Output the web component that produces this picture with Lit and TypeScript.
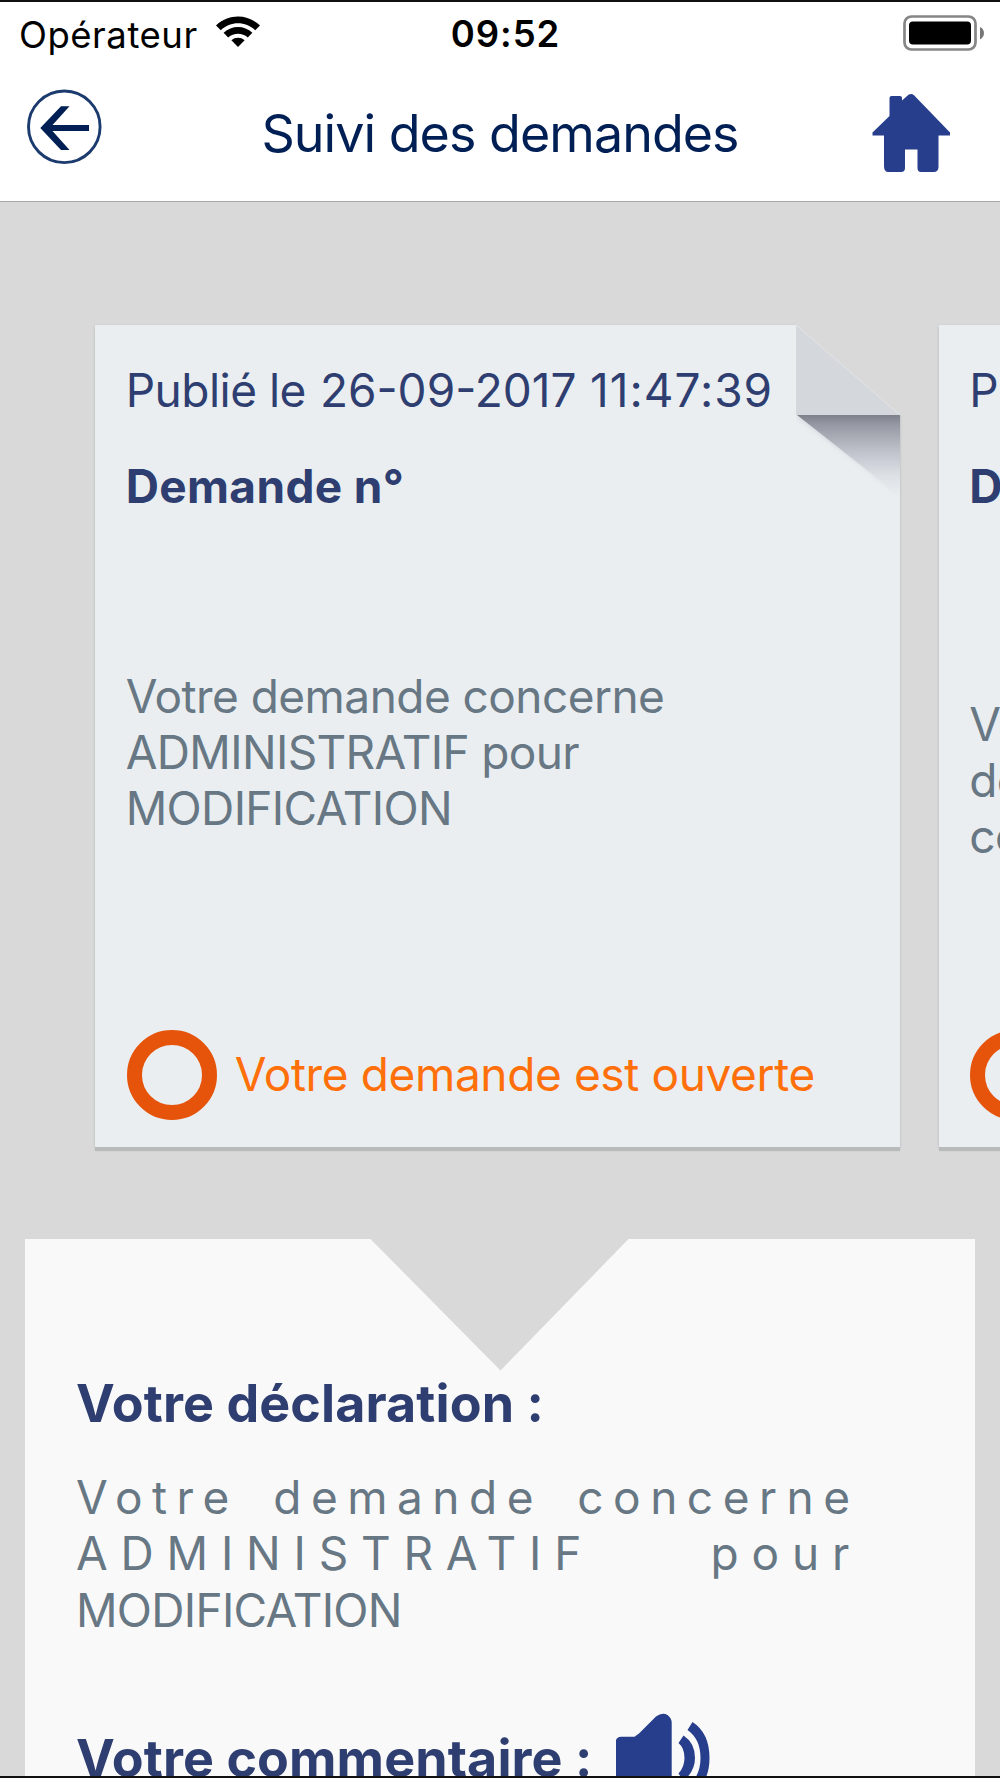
import { LitElement, html, css } from "lit";
import { customElement, property } from "lit/decorators.js";

@customElement("status-bar")
class StatusBar extends LitElement {
  static styles = css`
    :host { display: grid; grid-template-columns: 1fr auto 1fr; height: 64px; align-items: center; color: #000; }
    .left { display: flex; align-items: center; padding-left: 19px; gap: 18px; }
    .carrier { margin-top: 1px; font-size: 36.500px; line-height: 40px; letter-spacing: 0.52px; }
    .time { padding-left: 11px; font-size: 36.500px; line-height: 40px; font-weight: 600; letter-spacing: 0.95px; }
    .wifi { width: 44px; height: 32px; margin-top: -5px; }
    .right { display: flex; justify-content: flex-end; padding-right: 14px; }
    .battery { width: 83px; height: 36px; margin-top: -2px; }
  `;
  render() {
    return html`
      <div class="left">
        <span class="carrier">Opérateur</span>
        <svg class="wifi" viewBox="0 0 44 32">
          <path d="M0 9.400 C12.500-2.400 31.500-2.400 44 9.400 L39.200 14.200 C29.500 5 14.500 5 4.800 14.200 Z" />
          <path d="M7.600 16.800 C15.800 9.200 28.200 9.200 36.400 16.800 L31.800 21.400 C26.200 16.400 17.800 16.400 12.200 21.400 Z" />
          <path d="M15.400 24.200 C19.200 20.900 24.800 20.900 28.600 24.200 L22 31 Z" />
        </svg>
      </div>
      <span class="time">09:52</span>
      <div class="right">
        <svg class="battery" viewBox="0 0 83 36">
          <rect x="1.500" y="1.500" width="71" height="33" rx="7" fill="#fff" stroke="#868686" stroke-width="2.700" />
          <rect x="6" y="6.500" width="62" height="23" rx="4" fill="#000" />
          <path d="M77 12 C82.300 14 82.300 22 77 24.500 Z" fill="#777" />
        </svg>
      </div>
    `;
  }
}

@customElement("nav-bar")
class NavBar extends LitElement {
  static styles = css`
    :host { display: grid; grid-template-columns: 200px 1fr 200px; height: 136px; box-sizing: border-box; border-bottom: 1px solid #a8a8a8; color: #001f55; }
    .back { width: 76px; height: 76px; margin: 23px 0 0 26px; }
    .title { margin-top: 36px; text-align: center; font-size: 52px; line-height: 64px; letter-spacing: -0.97px; white-space: nowrap; }
    .home { width: 79px; height: 80px; margin: 27px 0 0 71.500px; }
  `;
  render() {
    return html`
      <svg class="back" viewBox="0 0 76 76" fill="none">
        <circle cx="38.300" cy="37.800" r="35.800" stroke="#1b3a6e" stroke-width="2.900" />
        <path d="M14.300 39 L35 17.300 H43.500 L26.500 36 H63 V42 H26.500 L43.500 61 H35 Z" fill="#001f55" />
      </svg>
      <span class="title">Suivi des demandes</span>
      <svg class="home" viewBox="0 0 79 80" fill="#263e8b">
        <path d="M17.500 23 V5 Q17.500 3 19.500 3 H28 Q30 3 30 5 V7.500 L36.500 1.800 Q39.500 0 42 2.300 L78 39.500 V42.500 H66.500 V74 Q66.500 79 61.500 79 H49 Q45.500 79 45.500 75 V56.500 H33 V75 Q33 79 29 79 H16.500 Q12 79 12 73 V42.500 H0.500 V39.500 Z" />
      </svg>
    `;
  }
}

@customElement("request-card")
class RequestCard extends LitElement {
  @property() date = "";
  @property() time = "";
  @property({ attribute: false }) lines: string[] = [];
  @property({ type: Boolean, reflect: true }) low = false;
  static styles = css`
    :host { display: block; position: relative; flex: none; box-sizing: border-box; width: 805px; height: 822px; padding: 36.500px 30.700px 0; background: #eaeef1; box-shadow: 0 4px 1px #b9bbbb, 0 1px 3px rgba(0, 0, 0, 0.12); font-size: 46px; line-height: 56.300px; color: #2f3e70; white-space: nowrap; }
    .fold { position: absolute; top: -3px; right: -4px; width: 108px; height: 180px; }
    .label { margin-right: 1px; letter-spacing: -0.5px; }
    .hour { margin-left: 0.500px; letter-spacing: 1px; }
    .number { margin-top: 40.500px; font-weight: 700; letter-spacing: 0.35px; }
    .body { box-sizing: border-box; height: 353px; padding-top: 153px; color: #677784; letter-spacing: -0.65px; }
    .body div:first-child { letter-spacing: -0.55px; }
    :host([low]) .body { padding-top: 181px; }
    .state { display: flex; align-items: center; gap: 18px; height: 90px; margin-top: 162px; padding-left: 1px; color: #ff6f0a; letter-spacing: -0.38px; }
    .ring { box-sizing: border-box; width: 90px; height: 90px; border: 15px solid #e6540b; border-radius: 50%; }
  `;
  render() {
    return html`
      <div><span class="label">Publié le</span> <span>${this.date}</span> <span class="hour">${this.time}</span></div>
      <div class="number">Demande n°</div>
      <div class="body">${this.lines.map((l) => html`<div>${l}</div>`)}</div>
      <div class="state"><span class="ring"></span><span>Votre demande est ouverte</span></div>
      <svg class="fold" viewBox="0 0 108 180">
        <defs>
          <linearGradient id="shade" x1="0" y1="0" x2="0" y2="1">
            <stop offset="0" stop-color="#7d7f8b" />
            <stop offset="0.120" stop-color="#9698a3" />
            <stop offset="0.450" stop-color="#bfc2cb" />
            <stop offset="0.750" stop-color="#dde1e5" />
            <stop offset="1" stop-color="#eaeef1" />
          </linearGradient>
          <filter id="soft" x="-20%" y="-20%" width="140%" height="140%"><feGaussianBlur stdDeviation="2.500" /></filter>
          <clipPath id="inside"><rect x="-10" y="0" width="114" height="180" /></clipPath>
        </defs>
        <g clip-path="url(#inside)">
          <path d="M1 5 V95 L104 172 V93 H0 Z" fill="#c5c9d0" opacity="0.600" filter="url(#soft)" />
          <path d="M1 93 H104 V174 Z" fill="url(#shade)" />
        </g>
        <path d="M0 3 V0 H108 V93 H104 Z" fill="#d9d9d9" />
        <path d="M0 3 L104 93 H0 Z" fill="#d4d7dc" />
        <path d="M0 3 L104 93" stroke="#e2e3e5" stroke-width="1" />
      </svg>
    `;
  }
}

@customElement("detail-panel")
class DetailPanel extends LitElement {
  static styles = css`
    :host { display: block; position: relative; box-sizing: border-box; flex: 1; min-height: 0; margin: 0 25px; padding: 134.500px 126px 0 51px; overflow: hidden; background: #f9f9f9; color: #2f3e70; white-space: nowrap; }
    .notch { position: absolute; top: 0; left: 345px; width: 259px; height: 132px; }
    .heading { display: flex; align-items: flex-start; font-size: 52px; line-height: 60px; font-weight: 700; letter-spacing: 0.1px; }
    .text { margin-top: 35.500px; font-size: 46px; line-height: 56.300px; letter-spacing: -0.7px; color: #677784; }
    .line { display: flex; justify-content: space-between; }
    .l1 { margin-right: -10.500px; letter-spacing: 9.500px; }
    .l2 { margin-right: -13px; letter-spacing: 12.800px; }
    .comment { margin-top: 91.500px; gap: 23px; }
    .speaker { width: 94px; height: 96px; margin-top: -16.500px; }
  `;
  render() {
    return html`
      <svg class="notch" viewBox="0 0 259 132"><path d="M0.500 0 H258.500 L130.500 131.500 Z" fill="#d9d9d9" /></svg>
      <div class="heading"><span>Votre déclaration :</span></div>
      <div class="text">
        <div class="line l1"><span>Votre</span><span>demande</span><span>concerne</span></div>
        <div class="line l2"><span>ADMINISTRATIF</span><span>pour</span></div>
        <div>MODIFICATION</div>
      </div>
      <div class="heading comment">
        <span>Votre commentaire :</span>
        <svg class="speaker" viewBox="0 0 94 96" fill="#263e8b">
          <path d="M0 27 Q1 24 5 23.700 H18.500 L23 20.500 L40 3.500 Q46 -1 51.500 2 Q55.700 5 55.700 10 V84 Q55.700 91 50 93 Q44 95 40 91 L22 73 H5 Q0 73 0 69 Z" />
          <path d="M67.500 22.500 Q79 30 79 45 Q79 58 67.500 68 L62.500 60.500 Q68.500 54 68.500 45 Q68.500 35 62.500 30 Z" />
          <path d="M76.500 9 Q93.500 20 93.500 45 Q93.500 69 76.500 81 L71.500 74 Q84.500 63 84.500 45 Q84.500 26 71.500 17 Z" />
        </svg>
      </div>
    `;
  }
}

@customElement("app-root")
class AppRoot extends LitElement {
  static styles = css`
    :host { display: flex; flex-direction: column; box-sizing: border-box; width: 1000px; height: 1778px; overflow: hidden; border-top: 2px solid #111; border-bottom: 2px solid #111; background: #d9d9d9; font-family: Inter, "Liberation Sans", sans-serif; }
    .top { background: #fff; }
    .cards { display: flex; gap: 38.600px; padding: 123px 0 92px 95px; overflow: hidden; }
  `;
  render() {
    return html`
      <div class="top"><status-bar></status-bar><nav-bar></nav-bar></div>
      <div class="cards">
        <request-card date="26-09-2017" time="11:47:39" .lines=${["Votre demande concerne", "ADMINISTRATIF pour", "MODIFICATION"]}></request-card>
        <request-card low date="26-09-2017" .lines=${["Votre", "demande", "concerne"]}></request-card>
      </div>
      <detail-panel></detail-panel>
    `;
  }
}
